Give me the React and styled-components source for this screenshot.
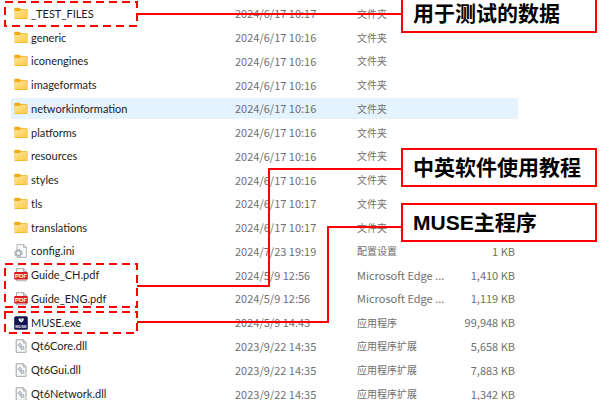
import React from "react";
import styled, { createGlobalStyle } from "styled-components";

const GlobalStyle = createGlobalStyle`
	* {
		box-sizing: border-box;
	}

	body {
		margin: 0;
		background: #fff;
		overflow: hidden;
	}
`;

const Page = styled.main`
	position: relative;
	overflow: hidden;
	font-family: "Noto Sans CJK SC", sans-serif;
`;

const ListWrapper = styled.div`
	padding: 0 82px 0 11px;
`;

const FileTable = styled.table`
	width: 100%;
	height: 407px;
	table-layout: fixed;
	border-collapse: separate;
	border-spacing: 0 3px;
	line-height: 12px;
	color: #6f6f6f;
`;

const FileRow = styled.tr`
	background: ${(props) => (props.$active ? "#e5f3ff" : "transparent")};
`;

const Cell = styled.td`
	padding: ${(props) => (props.$latin ? "0" : "1px 0 0")};
	vertical-align: middle;
	white-space: nowrap;
	font-size: ${(props) => (props.$latin ? "11px" : "10px")};
`;

const NameCell = styled(Cell)`
	padding-top: 1px;
	border-radius: 2px 0 0 2px;
	color: #1c1c1c;
	font-family: Lato, sans-serif;
`;

const SizeCell = styled(Cell)`
	padding-right: 3px;
	border-radius: 0 2px 2px 0;
	text-align: right;
`;

const FileName = styled.div`
	display: flex;
	align-items: center;
	gap: 3px;
	padding-left: 3px;
`;

const Icon = styled.svg`
	flex: none;
	width: 14px;
	height: 14px;
	font-family: "Liberation Sans", sans-serif;
`;

const Connectors = styled.svg`
	position: absolute;
	top: 0;
	left: 0;
	fill: none;
	stroke: #fe0000;
	stroke-width: 2px;
`;

const Callout = styled.div`
	position: absolute;
	top: ${(props) => props.$top}px;
	left: 401px;
	width: 196px;
	padding: 1px 10px 0;
	border: 2px solid #fe0000;
	background: #fff;
	color: #000;
	font-family: "Liberation Sans", "Noto Sans CJK SC", sans-serif;
	font-size: 21px;
	font-weight: 700;
	line-height: 34px;
	white-space: nowrap;
`;

function FolderIcon() {
	return (
		<Icon viewBox="0 0 14 14" aria-hidden="true">
			<defs>
				<linearGradient id="folder" x1="0" y1="0" x2="1" y2="1">
					<stop offset="0" stopColor="#ffe59a" />
					<stop offset="1" stopColor="#ffc93c" />
				</linearGradient>
			</defs>
			<path d="M.3 1.8q0-1 1-1h4.2l1.6 1.5h5.6q1 0 1 1v4H.3z" fill="#f0ac12" />
			<path d="M.3 4.5q0-.6.8-.6h4.6l1.2-.9h5.8q1 0 1 .9v7q0 1-1 1H1.3q-1 0-1-1z" fill="url(#folder)" />
			<path d="M.6 11.5h12.8" stroke="#eeb32b" strokeWidth=".7" />
		</Icon>
	);
}

function Gear({ x, y, r, color }) {
	return (
		<g fill="none" stroke={color}>
			<circle cx={x} cy={y} r={r} strokeWidth={r * 0.5} />
			<circle cx={x} cy={y} r={r * 1.4} strokeWidth={r * 0.5} strokeDasharray={`${r * 0.55} ${r * 0.55}`} />
		</g>
	);
}

function ConfigIcon() {
	return (
		<Icon viewBox="0 0 14 14" aria-hidden="true">
			<path d="M3 .6h6.8l2.6 2.7v10.1H3z" fill="#fafafa" stroke="#a5a5a5" strokeWidth=".8" />
			<path d="M9.6.6v2.9h2.8" fill="none" stroke="#a5a5a5" strokeWidth=".8" />
			<circle cx="4.4" cy="9.1" r="4.2" fill="#f4f4f4" />
			<Gear x={4.4} y={9.1} r={2.6} color="#a3a9ad" />
		</Icon>
	);
}

function DllIcon() {
	return (
		<Icon viewBox="0 0 14 14" aria-hidden="true">
			<path d="M2.2.8h7l2.8 2.8v9.7H2.2z" fill="#fbfbfb" stroke="#969696" strokeWidth=".9" />
			<path d="M9.1.8v3h2.9" fill="none" stroke="#969696" strokeWidth=".8" />
			<Gear x={5.8} y={6.1} r={1.3} color="#808a92" />
			<Gear x={8.2} y={9} r={1.4} color="#808a92" />
		</Icon>
	);
}

function PdfIcon() {
	return (
		<Icon viewBox="0 0 14 14" aria-hidden="true">
			<path d="M2.5.6h7.2l2.5 2.6v9.6H2.5z" fill="#f7f7f7" stroke="#9a9a9a" strokeWidth=".8" />
			<path d="M9.5.6v2.8h2.7" fill="none" stroke="#9a9a9a" strokeWidth=".8" />
			<rect x=".2" y="4" width="13.6" height="7.6" rx="1" fill="#dc1a22" />
			<text x="7" y="9.9" textAnchor="middle" fontSize="6" fontWeight="700" fill="#fff">
				PDF
			</text>
		</Icon>
	);
}

function MuseIcon() {
	return (
		<Icon viewBox="0 0 14 14" aria-hidden="true">
			<rect x=".2" y=".2" width="13.6" height="13.6" rx="1.6" fill="#10154f" />
			<path d="M4.6 2.4q1.2-.6 2.2.6 1.4-1.4 2.8-.4.6 1.6-.7 2.7L7.3 6.6 5.5 5.2Q4.2 4 4.6 2.4z" fill="#fff" />
			<circle cx="7.4" cy="3.9" r=".7" fill="#5961a8" />
			<text x="7" y="11.6" textAnchor="middle" fontSize="4" fontWeight="700" fill="#e4e6f5">
				MUSE
			</text>
		</Icon>
	);
}

const icons = {
	folder: FolderIcon,
	config: ConfigIcon,
	pdf: PdfIcon,
	muse: MuseIcon,
	dll: DllIcon,
};

const files = [
	{ name: "_TEST_FILES", date: "2024/6/17 10:17", type: "文件夹", icon: "folder" },
	{ name: "generic", date: "2024/6/17 10:16", type: "文件夹", icon: "folder" },
	{ name: "iconengines", date: "2024/6/17 10:16", type: "文件夹", icon: "folder" },
	{ name: "imageformats", date: "2024/6/17 10:16", type: "文件夹", icon: "folder" },
	{ name: "networkinformation", date: "2024/6/17 10:16", type: "文件夹", icon: "folder", active: true },
	{ name: "platforms", date: "2024/6/17 10:16", type: "文件夹", icon: "folder" },
	{ name: "resources", date: "2024/6/17 10:16", type: "文件夹", icon: "folder" },
	{ name: "styles", date: "2024/6/17 10:16", type: "文件夹", icon: "folder" },
	{ name: "tls", date: "2024/6/17 10:17", type: "文件夹", icon: "folder" },
	{ name: "translations", date: "2024/6/17 10:17", type: "文件夹", icon: "folder" },
	{ name: "config.ini", date: "2024/7/23 19:19", type: "配置设置", size: "1 KB", icon: "config" },
	{ name: "Guide_CH.pdf", date: "2024/5/9 12:56", type: "Microsoft Edge ...", size: "1,410 KB", icon: "pdf" },
	{ name: "Guide_ENG.pdf", date: "2024/5/9 12:56", type: "Microsoft Edge ...", size: "1,119 KB", icon: "pdf" },
	{ name: "MUSE.exe", date: "2024/5/9 14:43", type: "应用程序", size: "99,948 KB", icon: "muse" },
	{ name: "Qt6Core.dll", date: "2023/9/22 14:35", type: "应用程序扩展", size: "5,658 KB", icon: "dll" },
	{ name: "Qt6Gui.dll", date: "2023/9/22 14:35", type: "应用程序扩展", size: "7,883 KB", icon: "dll" },
	{ name: "Qt6Network.dll", date: "2023/9/22 14:35", type: "应用程序扩展", size: "1,342 KB", icon: "dll" },
];

function File({ file }) {
	const FileIcon = icons[file.icon];

	return (
		<FileRow $active={file.active}>
			<NameCell $latin>
				<FileName>
					<FileIcon />
					{file.name}
				</FileName>
			</NameCell>
			<Cell $latin>{file.date}</Cell>
			<Cell $latin={file.icon === "pdf"}>{file.type}</Cell>
			<SizeCell $latin>{file.size}</SizeCell>
		</FileRow>
	);
}

const NameCol = styled.col`
	width: 224px;
`;

const DateCol = styled.col`
	width: 122px;
`;

const SizeCol = styled.col`
	width: 64px;
`;

export default function App() {
	return (
		<Page>
			<GlobalStyle />
			<ListWrapper>
				<FileTable>
					<colgroup>
						<NameCol />
						<DateCol />
						<col />
						<SizeCol />
					</colgroup>
					<tbody>
						{files.map((file) => (
							<File key={file.name} file={file} />
						))}
					</tbody>
				</FileTable>
			</ListWrapper>

			<Connectors width="600" height="400" aria-hidden="true">
				<g strokeDasharray="8 5">
					<rect x="5" y="2" width="132" height="24" />
					<rect x="5" y="264" width="132" height="43" />
					<rect x="5" y="312" width="132" height="21" />
				</g>
				<path d="M137 14H402" />
				<path d="M137 286H269V169H402" />
				<path d="M137 322H328V227H402" />
			</Connectors>
			<Callout $top={-6}>用于测试的数据</Callout>
			<Callout $top={148}>中英软件使用教程</Callout>
			<Callout $top={203}>MUSE主程序</Callout>
		</Page>
	);
}
